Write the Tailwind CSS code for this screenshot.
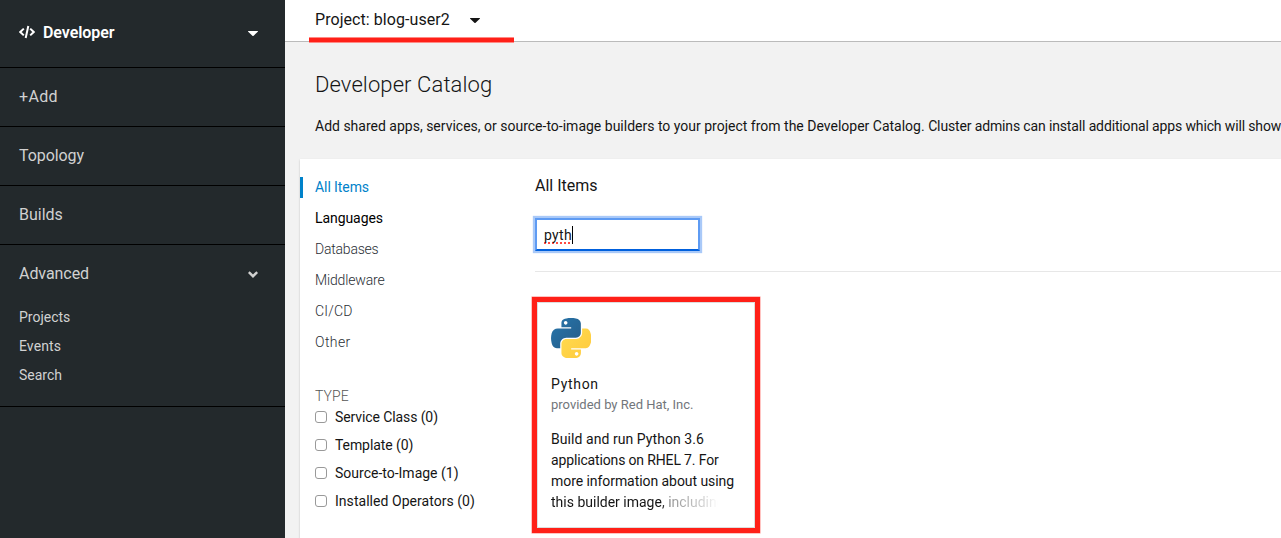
<!DOCTYPE html>
<html lang="en">
<head>
<meta charset="utf-8">
<title>Developer Catalog</title>
<script src="https://cdn.jsdelivr.net/npm/@tailwindcss/browser@4"></script>
</head>
<body class="flex h-[538px] w-[1281px] overflow-hidden bg-[#f2f2f2] font-['Roboto',sans-serif] text-sm text-[#151515]">
  <nav class="h-full w-[285px] shrink-0 bg-[#23292c] text-base text-[#d1d1d1]">
    <div class="flex h-[68px] items-center border-b border-black pr-[27px] pb-[2px] pl-[19px] font-semibold text-white">
      <svg class="mr-2 mb-[2px] h-[14px] w-4" viewBox="0 0 16 14" fill="none" stroke="currentColor" stroke-width="2"><path d="M4.8 3.6 1.3 7l3.5 3.4M11.2 3.6 14.7 7l-3.5 3.4M9.3 1 6.700 13"/></svg>
      <span class="tracking-[-0.05px]">Developer</span>
      <svg class="mt-px ml-auto h-[5px] w-[10px]" viewBox="0 0 10 5" fill="currentColor"><path d="M.5 0h9c.5 0 .6.4.3.7L5.6 4.7c-.4.4-.8.4-1.2 0L.2.7C-.1.4 0 0 .5 0z"/></svg>
    </div>
    <a class="flex h-[59px] items-center border-b border-black pl-[19px] tracking-[0.36px]">+Add</a>
    <a class="flex h-[59px] items-center border-b border-black pl-[19px] tracking-[-0.07px]">Topology</a>
    <a class="flex h-[59px] items-center border-b border-black pl-[19px]">Builds</a>
    <div class="h-[162px] border-b border-black">
      <div class="flex h-[58px] items-center pr-[27px] pl-[19px]">
        <span class="tracking-[-0.06px]">Advanced</span>
        <svg class="mt-px ml-auto h-[7px] w-[10px]" viewBox="0 0 10 7" fill="none" stroke="currentColor" stroke-width="2.4"><path d="M.8 1.1 5 5.2l4.2-4.1"/></svg>
      </div>
      <div class="flex flex-col pl-[19px] text-sm">
        <a class="h-[29px] leading-[29px]">Projects</a>
        <a class="h-[29px] leading-[29px] tracking-[0.09px]">Events</a>
        <a class="h-[29px] leading-[29px]">Search</a>
      </div>
    </div>
  </nav>

  <main class="flex min-w-0 flex-1 flex-col">
    <div class="relative flex h-[42px] shrink-0 items-center border-b border-[#bbb] bg-white pb-[2px] pl-[30px] text-base">
      <span class="tracking-[0.06px]">Project: blog-user2</span>
      <svg class="mt-[2px] ml-5 h-[5px] w-[10px]" viewBox="0 0 10 5" fill="currentColor"><path d="M.5 0h9c.5 0 .6.4.3.7L5.6 4.700c-.4.4-.8.4-1.2 0L.2.7C-.1.4 0 0 .5 0z"/></svg>
      <div class="absolute top-[37px] left-6 h-[6px] w-[205px] border-y border-[#ff8a85] bg-[#ff2018]"></div>
    </div>
    <header class="h-[117px] shrink-0 pt-[27px] pl-[30px] whitespace-nowrap">
      <h1 class="h-8 text-[22px] leading-8 font-light tracking-[0.1px]">Developer Catalog</h1>
      <p class="mt-[15px] leading-[21px]">Add shared apps, services, or source-to-image builders to your project from the Developer Catalog. <span class="tracking-[-0.14px]">Cluster admins can install additional apps which will show</span></p>
    </header>
    <section class="ml-[15px] flex flex-1 bg-white shadow-[0_1px_2px_rgba(3,3,3,0.2)]">
      <aside class="w-[235px] shrink-0 pt-[18px]">
        <ul class="flex flex-col gap-[10px] leading-[21px] font-light text-[#292e34]">
          <li class="border-l-3 border-[#0082ca] pl-3 font-normal tracking-[-0.08px] text-[#0082ca]">All Items</li>
          <li class="pl-[15px] font-normal tracking-[-0.07px] text-black">Languages</li>
          <li class="pl-[15px] tracking-[-0.21px]">Databases</li>
          <li class="pl-[15px] tracking-[-0.15px]">Middleware</li>
          <li class="pl-[15px] tracking-[0.2px]">CI/CD</li>
          <li class="pl-[15px] tracking-[0.4px]">Other</li>
        </ul>
        <h2 class="mt-[33px] pl-[15px] leading-[21px] font-light tracking-[0.1px] text-[#555]">TYPE</h2>
        <div class="flex flex-col gap-[7px] pl-[15px] leading-[21px]">
          <label class="flex items-center gap-2 tracking-[-0.1px]"><i class="mb-px size-3 rounded-[3px] border border-[#999] bg-white"></i>Service Class (0)</label>
          <label class="flex items-center gap-2 tracking-[-0.09px]"><i class="mb-px size-3 rounded-[3px] border border-[#999] bg-white"></i>Template (0)</label>
          <label class="flex items-center gap-2"><i class="mb-px size-3 rounded-[3px] border border-[#999] bg-white"></i>Source-to-Image (1)</label>
          <label class="flex items-center gap-2 tracking-[0.04px]"><i class="mb-px size-3 rounded-[3px] border border-[#999] bg-white"></i>Installed Operators (0)</label>
        </div>
      </aside>
      <div class="flex-1 pt-[15px]">
        <h2 class="text-base leading-6">All Items</h2>
        <div class="mt-5 flex h-[33px] w-[165px] items-center border-2 border-[#5e9bf3] border-b-[#0060dd] pl-[7px] shadow-[0_0_1px_2px_#a9c9f8]">
          <span class="tracking-[0.3px] underline decoration-[#ff4a42] decoration-dotted decoration-2 underline-offset-[3px] [text-decoration-skip-ink:none]">pyth</span><i class="h-[18px] w-px bg-black"></i>
        </div>
        <div class="mt-5 h-px bg-[#e7e7e7]"></div>
        <article class="mt-[25px] -ml-[3px] h-[236px] w-[228px] border-5 border-[#ff2018] bg-white pt-4 pl-[14px] shadow-[0_0_0_0.5px_#ff8a85,inset_0_0_0_1px_#ddd]">
          <svg class="size-10" viewBox="0 0 110 110">
            <defs>
              <linearGradient id="b" x1="0" y1="0" x2="1" y2="1"><stop stop-color="#2676ad"/><stop offset="1" stop-color="#265b86"/></linearGradient>
              <linearGradient id="y" x1="0" y1="0" x2="1" y2="1"><stop stop-color="#ffdc50"/><stop offset="1" stop-color="#ffc93d"/></linearGradient>
            </defs>
            <path fill="url(#b)" d="M54.9 0c-4.6 0-9 .4-12.8 1.1C30.8 3.100 28.700 7.300 28.700 15v10.200h26.800v3.400H18.700c-7.800 0-14.600 4.700-16.800 13.600-2.400 10.200-2.500 16.600 0 27.200C3.800 77.300 8.300 83 16.100 83h9.200V70.800c0-8.900 7.600-16.700 16.700-16.700h26.700c7.400 0 13.400-6.100 13.400-13.600V15c0-7.300-6.100-12.700-13.400-13.900C64.100.3 59.400 0 54.900 0zM40.400 8.200c2.800 0 5 2.300 5 5.100s-2.200 5.100-5 5.100-5-2.300-5-5.100 2.200-5.100 5-5.100z"/>
            <path fill="url(#y)" d="M85.600 28.700v11.900c0 9.200-7.800 17-16.700 17H42.100c-7.300 0-13.400 6.300-13.400 13.600v25.500c0 7.300 6.300 11.500 13.400 13.600 8.500 2.500 16.600 2.900 26.800 0 6.700-1.900 13.400-5.900 13.400-13.600V86.500H55.500v-3.400h40.200c7.800 0 10.700-5.400 13.400-13.600 2.800-8.400 2.700-16.500 0-27.200-1.900-7.800-5.600-13.600-13.400-13.600H85.600zM70.500 93.300c2.800 0 5 2.300 5 5.100s-2.200 5.100-5 5.100-5-2.300-5-5.100 2.200-5.100 5-5.100z"/>
          </svg>
          <h3 class="mt-4 leading-[21px] tracking-[0.7px]">Python</h3>
          <p class="text-[13px] leading-5 text-[#72767b]">provided by Red Hat, Inc.</p>
          <div class="mt-[14px] w-[186px] leading-[21px] whitespace-nowrap">
            <div class="tracking-[0.06px]">Build and run Python 3.6</div>
            <div class="tracking-[-0.15px]">applications on RHEL 7. For</div>
            <div class="tracking-[-0.06px]">more information about using</div>
            <div class="[mask-image:linear-gradient(to_right,black_110px,rgba(0,0,0,0.45)_120px,rgba(0,0,0,0.2)_152px,transparent_167px)]">this builder image, including</div>
          </div>
        </article>
      </div>
    </section>
  </main>
</body>
</html>
